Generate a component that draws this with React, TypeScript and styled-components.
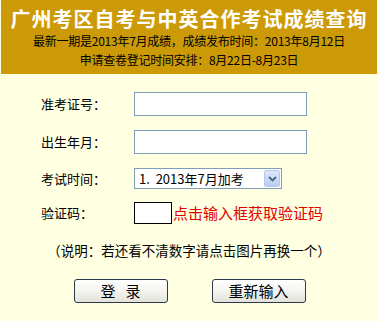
import styled, { createGlobalStyle } from "styled-components";

const GlobalStyle = createGlobalStyle`
  html, body {
    margin: 0;
    padding: 0;
    background: #ffffe1;
  }
  body {
    font-family: "Noto Sans CJK SC", "DejaVu Sans", sans-serif;
    color: #000;
  }
`;

const Page = styled.div`
  width: 378px;
  height: 321px;
  background: #ffffe1;
  overflow: hidden;
`;

const Header = styled.header`
  height: 74px;
  box-sizing: border-box;
  margin: 0 1px;
  padding-top: 7px;
  background: #cc9a06;
  text-align: center;
`;

const Title = styled.h1`
  margin: 0;
  font-size: 20px;
  line-height: 24px;
  font-weight: bold;
  letter-spacing: 1px;
  color: #ffffff;
`;

const Notice = styled.p`
  margin: 0;
  font-size: 12px;
  line-height: 19px;
  letter-spacing: -0.25px;
  color: #000;
`;

const Form = styled.form`
  display: flex;
  flex-direction: column;
  padding-top: 18px;
`;

const Row = styled.div<{ $gap: number; $height: number }>`
  display: flex;
  align-items: center;
  margin-top: ${(p) => p.$gap}px;
  height: ${(p) => p.$height}px;
  padding-left: 41px;
`;

const Label = styled.label`
  width: 93px;
  font-size: 13px;
  line-height: 16px;
`;

const TextInput = styled.input`
  width: 173px;
  height: 24px;
  box-sizing: border-box;
  border: 1px solid #7f9db9;
  background: #fff;
  padding: 0 4px;
  font-size: 13px;
  outline: none;
`;

const SelectBox = styled.div`
  display: flex;
  align-items: center;
  width: 148px;
  height: 21px;
  box-sizing: border-box;
  border: 1px solid #7f9db9;
  background: #fff;
  padding: 1px 1px 1px 4px;
  font-size: 13px;
`;

const SelectText = styled.span`
  flex: 1;
  white-space: pre;
`;

const ArrowButton = styled.span`
  display: flex;
  align-items: center;
  justify-content: center;
  width: 16px;
  height: 17px;
  box-sizing: border-box;
  border: 1px solid #b7c9ea;
  border-radius: 2px;
  background: linear-gradient(#dde7fb, #b9cdf4);
`;

const CaptchaBox = styled.input`
  width: 38px;
  height: 22px;
  box-sizing: border-box;
  border: 1px solid #000;
  background: #fff;
  padding: 0;
  outline: none;
`;

const CaptchaHint = styled.span`
  margin-left: 1px;
  font-size: 15px;
  line-height: 18px;
  color: #e00000;
`;

const Note = styled.p`
  margin: 16px 0 0;
  text-align: center;
  font-size: 13.5px;
  line-height: 20px;
`;

const Buttons = styled.div`
  display: flex;
  justify-content: center;
  gap: 44px;
  margin-top: 19px;
  padding-left: 1px;
`;

const Button = styled.button`
  width: 94px;
  height: 24px;
  box-sizing: border-box;
  border: 1px solid #2b3a4a;
  border-radius: 3px;
  background: linear-gradient(#ffffff 0%, #f4f4f0 50%, #e2e2da 100%);
  font-family: "Noto Sans CJK SC", sans-serif;
  font-size: 15px;
  line-height: 20px;
  padding: 0;
  color: #000;
  white-space: pre;
`;

const App = () => {
  return (
    <Page>
      <GlobalStyle />
      <Header>
        <Title>广州考区自考与中英合作考试成绩查询</Title>
        <Notice>最新一期是2013年7月成绩，成绩发布时间：2013年8月12日</Notice>
        <Notice>申请查卷登记时间安排：8月22日-8月23日</Notice>
      </Header>
      <Form onSubmit={(e) => e.preventDefault()}>
        <Row $gap={0} $height={24}>
          <Label>准考证号：</Label>
          <TextInput type="text" />
        </Row>
        <Row $gap={14} $height={24}>
          <Label>出生年月：</Label>
          <TextInput type="text" />
        </Row>
        <Row $gap={14} $height={21}>
          <Label>考试时间：</Label>
          <SelectBox>
            <SelectText>1.  2013年7月加考</SelectText>
            <ArrowButton>
              <svg width="9" height="6" viewBox="0 0 9 6">
                <path d="M1 1 L4.5 4.5 L8 1" fill="none" stroke="#4d6185" strokeWidth="1.8" />
              </svg>
            </ArrowButton>
          </SelectBox>
        </Row>
        <Row $gap={13} $height={22}>
          <Label>验证码：</Label>
          <CaptchaBox type="text" />
          <CaptchaHint>点击输入框获取验证码</CaptchaHint>
        </Row>
        <Note>（说明：若还看不清数字请点击图片再换一个）</Note>
        <Buttons>
          <Button type="submit">登   录</Button>
          <Button type="reset">重新输入</Button>
        </Buttons>
      </Form>
    </Page>
  );
};

export default App;
